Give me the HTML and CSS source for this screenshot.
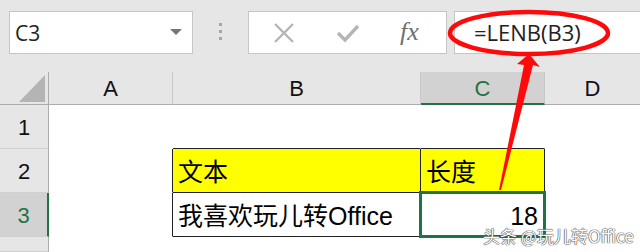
FILE: index.html
```html
<!DOCTYPE html>
<html lang="zh-CN">
<head>
    <meta charset="UTF-8">
    <title>LENB</title>
    <link rel="stylesheet" href="styles.css">
</head>
<body>

    <div class="toolbar">
        <div class="namebox">
            <span class="name">C3</span>
            <span class="drop"></span>
        </div>
        <div class="dots"><i></i><i></i><i></i></div>
        <div class="buttons">
            <svg class="btn-x" width="22" height="20" viewBox="0 0 22 20">
                <path d="M2 1 L20 19 M20 1 L2 19" stroke="#b5b5b5" stroke-width="2.4" fill="none"/>
            </svg>
            <svg class="btn-ok" width="24" height="20" viewBox="0 0 24 20">
                <path d="M2 10 L9 17 L22 3" stroke="#b5b5b5" stroke-width="3.4" fill="none"/>
            </svg>
            <span class="fx">fx</span>
        </div>
        <div class="formula">=LENB(B3)</div>
    </div>

    <div class="sheet">
        <div class="corner"><span class="tri"></span></div>
        <div class="colhead">A</div>
        <div class="colhead">B</div>
        <div class="colhead active">C</div>
        <div class="colhead last">D</div>

        <div class="rowhead">1</div>
        <div class="cell"></div>
        <div class="cell top-edge"></div>
        <div class="cell top-edge"></div>
        <div class="cell"></div>

        <div class="rowhead">2</div>
        <div class="cell left-edge"></div>
        <div class="cell boxed yellow">文本</div>
        <div class="cell boxed yellow">长度</div>
        <div class="cell"></div>

        <div class="rowhead active">3</div>
        <div class="cell left-edge"></div>
        <div class="cell boxed">我喜欢玩儿转Office</div>
        <div class="cell boxed num selected">18</div>
        <div class="cell"></div>

        <div class="rowhead"></div>
        <div class="cell"></div>
        <div class="cell"></div>
        <div class="cell"></div>
        <div class="cell"></div>
    </div>

    <svg class="mark" width="640" height="252" viewBox="0 0 640 252">
        <ellipse cx="529" cy="33" rx="79" ry="21" stroke="#ff0a0a" stroke-width="4.5" fill="none"/>
        <polygon points="529,54 540,67 533,65 501,190 499,190 524,65 517,64" fill="#ff0a0a"/>
    </svg>

    <div class="watermark">头条 @玩儿转Office</div>

</body>
</html>
```

FILE: styles.css
```css
body {
    margin: 0;
    width: 640px;
    height: 252px;
    overflow: hidden;
    background-color: #fff;
    font-family: "Liberation Sans", "Noto Sans CJK SC", sans-serif;
    position: relative;
}

.toolbar {
    height: 72px;
    background-color: #e6e6e6;
    display: flex;
    align-items: flex-start;
    padding: 11px 0 0 9px;
    box-sizing: border-box;
}

.namebox, .buttons, .formula {
    height: 43px;
    box-sizing: border-box;
    background-color: #fff;
    border: 1px solid #c6c6c6;
}

.namebox {
    width: 184px;
    display: flex;
    align-items: center;
    justify-content: space-between;
    padding: 0 10px 0 5px;
}

.name {
    font-family: "Open Sans", sans-serif;
    font-size: 21px;
    color: #222;
}

.drop {
    width: 0;
    height: 0;
    border-left: 6px solid transparent;
    border-right: 6px solid transparent;
    border-top: 6px solid #777;
    margin-top: -2px;
}

.dots {
    width: 55px;
    display: flex;
    flex-direction: column;
    align-items: center;
    gap: 4px;
    padding-top: 12px;
}

.dots i {
    width: 3px;
    height: 3px;
    background-color: #a6a6a6;
}

.buttons {
    width: 199px;
    display: flex;
    align-items: center;
    padding-left: 24px;
}

.btn-x {
    margin-right: 41px;
}

.btn-ok {
    margin-right: 40px;
}

.fx {
    font-family: "Liberation Serif", serif;
    font-style: italic;
    font-size: 26px;
    color: #707070;
    margin-top: -2px;
}

.formula {
    flex: 1;
    margin-left: 7px;
    border-right: none;
    padding-left: 19px;
    font-family: "Open Sans", sans-serif;
    font-size: 22px;
    line-height: 40px;
    color: #222;
}

.sheet {
    display: grid;
    grid-template-columns: 49px 124px 248px 124px 1fr;
    grid-template-rows: 33px 44px 44px 44px 1fr;
    height: 180px;
}

.sheet > div {
    box-sizing: border-box;
}

.corner {
    background-color: #e6e6e6;
    border-right: 1px solid #acacac;
    border-bottom: 1px solid #acacac;
    position: relative;
}

.tri {
    position: absolute;
    right: 3px;
    bottom: 2px;
    width: 0;
    height: 0;
    border-left: 26px solid transparent;
    border-bottom: 27px solid #b4b4b4;
}

.colhead {
    background-color: #e6e6e6;
    border-right: 1px solid #c8c8c8;
    border-bottom: 1px solid #acacac;
    font-size: 22px;
    color: #111;
    display: flex;
    align-items: center;
    justify-content: center;
    padding-top: 2px;
}

.colhead.last {
    border-right: none;
}

.colhead.active {
    background-color: #d2d2d2;
    color: #217346;
    border-bottom: 2px solid #217346;
}

.rowhead {
    background-color: #e6e6e6;
    border-right: 1px solid #acacac;
    border-bottom: 1px solid #d0d0d0;
    font-size: 22px;
    color: #111;
    display: flex;
    align-items: center;
    justify-content: center;
    padding-top: 3px;
}

.rowhead.active {
    background-color: #d2d2d2;
    color: #217346;
    border-right: 2px solid #217346;
}

.cell {
    border-right: 1px solid transparent;
    border-bottom: 1px solid transparent;
    font-size: 25px;
    color: #000;
    display: flex;
    align-items: flex-end;
    padding: 0 5px 5px;
    line-height: 30px;
}

.top-edge {
    border-bottom-color: #222;
}

.left-edge {
    border-right-color: #222;
}

.boxed {
    border-right-color: #222;
    border-bottom-color: #222;
}

.yellow {
    background-color: #ffff00;
}

.num {
    justify-content: flex-end;
    padding-right: 6px;
}

.selected {
    position: relative;
}

.selected::after {
    content: "";
    position: absolute;
    top: -2px;
    left: -2px;
    right: -2px;
    bottom: -2px;
    border: 3px solid #217346;
}

.mark {
    position: absolute;
    top: 0;
    left: 0;
}

.watermark {
    position: absolute;
    left: 483px;
    top: 226px;
    font-family: "Noto Sans CJK SC", sans-serif;
    font-size: 17px;
    line-height: 20px;
    color: #fff;
    text-shadow: 0 0 1px #444, 0 0 1px #444, 0 0 1px #444;
}
```
